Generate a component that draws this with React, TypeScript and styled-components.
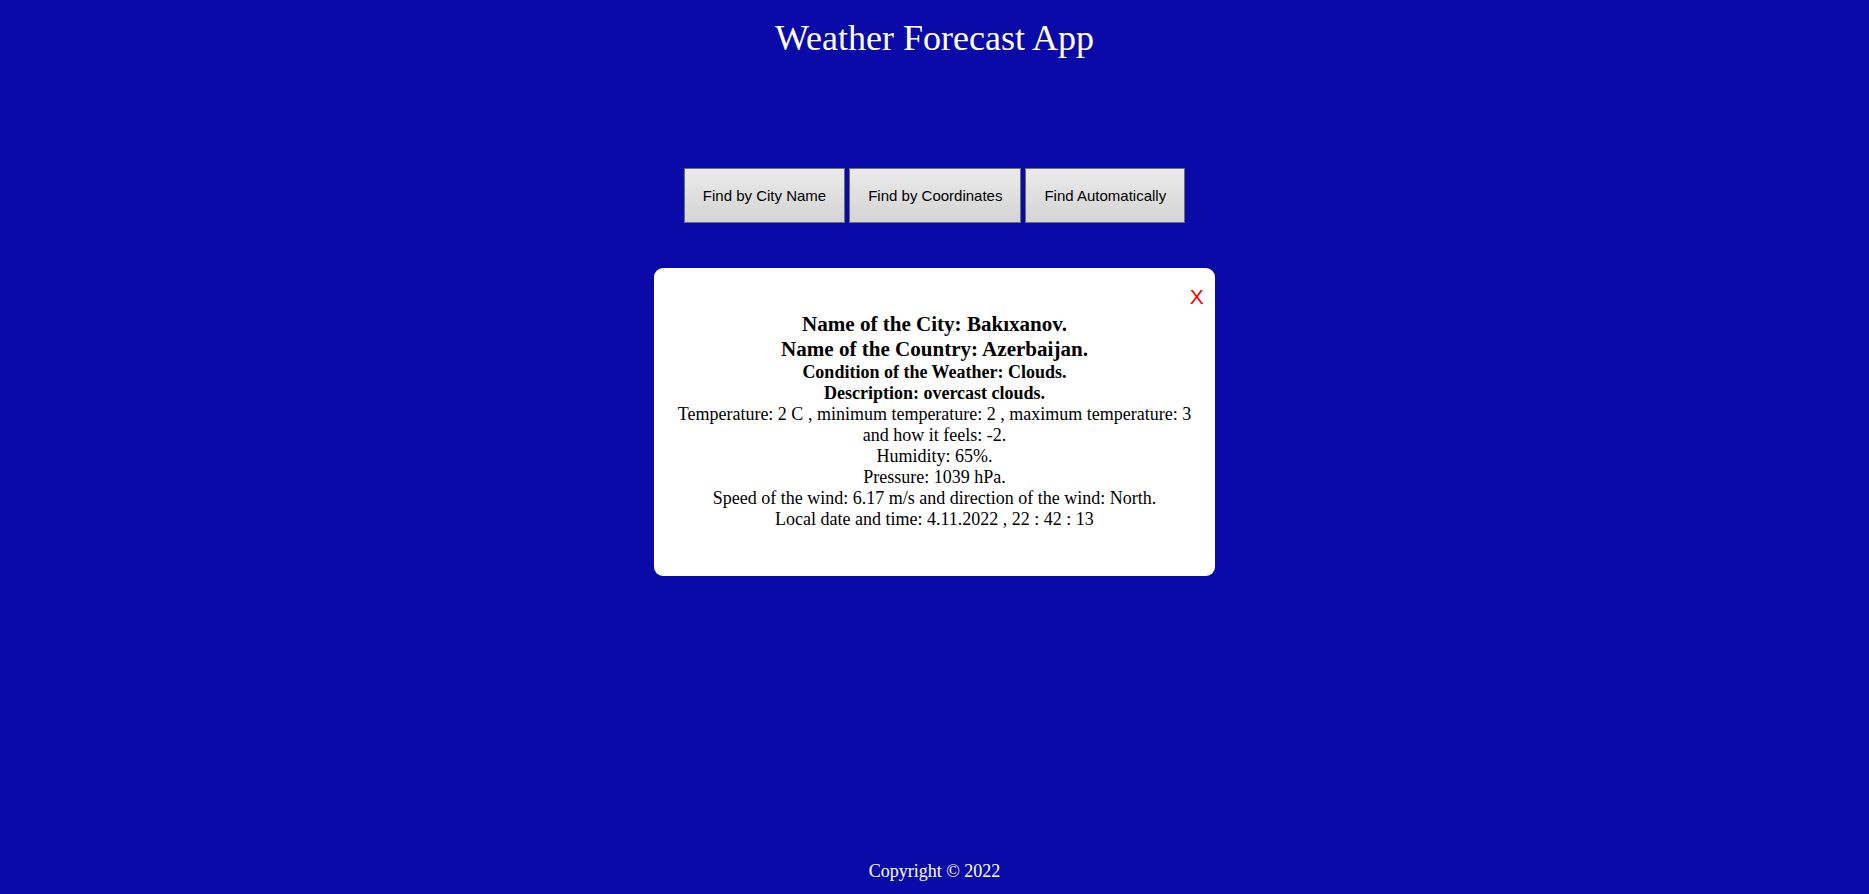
import React from 'react';
import styled, { createGlobalStyle } from 'styled-components';

const GlobalStyle = createGlobalStyle`
  html, body {
    margin: 0;
    padding: 0;
    background-color: #0a0aa9;
    font-family: "Liberation Serif", "Times New Roman", serif;
  }
`;

const Page = styled.div`
  min-height: 100vh;
  display: flex;
  flex-direction: column;
  align-items: center;
  color: white;
  box-sizing: border-box;
`;

const Title = styled.h1`
  margin: 0;
  padding-top: 17px;
  font-size: 36px;
  font-weight: normal;
  line-height: normal;
  color: white;
`;

const Toolbar = styled.div`
  display: flex;
  gap: 4px;
  margin-top: 109px;
`;

const Button = styled.button`
  font-family: "Liberation Sans", Arial, sans-serif;
  font-size: 15px;
  color: black;
  padding: 1.2em;
  line-height: normal;
  background: linear-gradient(#ebebeb, #d4d4d4);
  border: 1px solid #6e6e6e;
  border-radius: 0;
  cursor: pointer;
`;

const Card = styled.div`
  align-self: flex-start;
  margin-left: 35%;
  margin-top: 45px;
  width: 30%;
  box-sizing: border-box;
  padding: 17px 11px 46px 11px;
  background-color: white;
  border-radius: 9px;
  color: black;
  font-size: 18px;
  text-align: center;
`;

const CloseRow = styled.div`
  display: flex;
  justify-content: flex-end;
`;

const Close = styled.button`
  font-family: "Liberation Sans", Arial, sans-serif;
  font-size: 21px;
  color: red;
  background: none;
  border: none;
  padding: 0;
  line-height: normal;
  cursor: pointer;
`;

const Info = styled.div`
  margin-top: 3px;
  line-height: normal;
`;

const City = styled.h3`
  margin: 0;
  font-size: 1.17em;
`;

const Detail = styled.h4`
  margin: 0;
  font-size: 1em;
`;

const Line = styled.p`
  margin: 0;
`;

const Footer = styled.footer`
  margin-top: auto;
  padding-bottom: 12px;
  font-size: 18px;
  color: white;
`;

const App = () => {
  return (
    <>
      <GlobalStyle />
      <Page>
        <Title>Weather Forecast App</Title>
        <Toolbar>
          <Button>Find by City Name</Button>
          <Button>Find by Coordinates</Button>
          <Button>Find Automatically</Button>
        </Toolbar>
        <Card>
          <CloseRow>
            <Close>X</Close>
          </CloseRow>
          <Info>
            <City>Name of the City: Bakıxanov.</City>
            <City>Name of the Country: Azerbaijan.</City>
            <Detail>Condition of the Weather: Clouds.</Detail>
            <Detail>Description: overcast clouds.</Detail>
            <Line>Temperature: 2 C , minimum temperature: 2 , maximum temperature: 3 and how it feels: -2.</Line>
            <Line>Humidity: 65%.</Line>
            <Line>Pressure: 1039 hPa.</Line>
            <Line>Speed of the wind: 6.17 m/s and direction of the wind: North.</Line>
            <Line>Local date and time: 4.11.2022 , 22 : 42 : 13</Line>
          </Info>
        </Card>
        <Footer>Copyright © 2022</Footer>
      </Page>
    </>
  );
};

export default App;
